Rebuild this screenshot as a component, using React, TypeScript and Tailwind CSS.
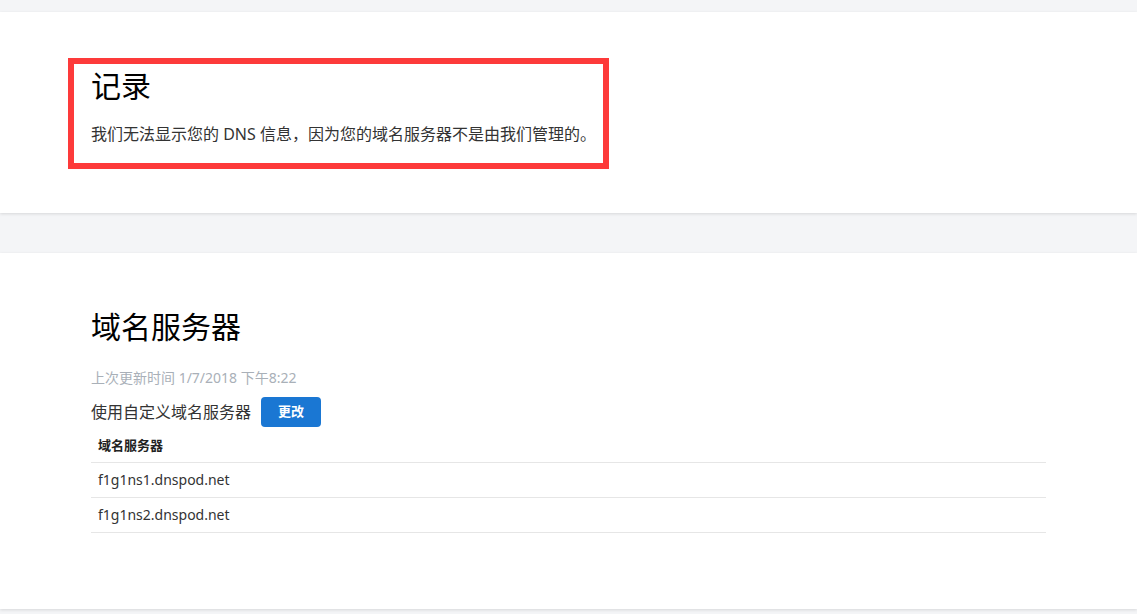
const font = { fontFamily: '"Noto Sans", "Noto Sans CJK SC", sans-serif' };

export default function App() {
  const servers = ["f1g1ns1.dnspod.net", "f1g1ns2.dnspod.net"];
  return (
    <div className="min-h-screen bg-[#f4f5f7] pt-[12px] text-[#222]" style={font}>
      {/* 记录 */}
      <section className="h-[201px] bg-white pl-[68px] pt-[46px] shadow-[0_1px_3px_rgba(0,0,0,0.12)]">
        <div className="h-[111px] w-[541px] border-[6px] border-[#fd3a3a] pl-[17px] pt-[4px]">
          <h2 className="text-[30px] leading-[36px] text-black">记录</h2>
          <p className="mt-[19px] text-[16px] leading-[22px] text-[#333]">
            我们无法显示您的 DNS 信息，因为您的域名服务器不是由我们管理的。
          </p>
        </div>
      </section>

      {/* 域名服务器 */}
      <section className="mt-[40px] h-[356px] bg-white pl-[91px] pr-[91px] pt-[54px] shadow-[0_1px_3px_rgba(0,0,0,0.12)]">
        <h2 className="text-[30px] leading-[40px] text-black">域名服务器</h2>
        <p className="mt-[21px] text-[14px] leading-[20px] text-[#a9b0b8]">上次更新时间 1/7/2018 下午8:22</p>
        <div className="mt-[9px] flex items-center gap-[10px]">
          <span className="text-[16px] text-[#333]">使用自定义域名服务器</span>
          <button className="h-[30px] w-[60px] rounded-[4px] bg-[#1a77d3] text-[13px] font-bold text-white">更改</button>
        </div>
        <table className="mt-[2px] w-[955px] text-left">
          <thead>
            <tr className="border-b border-[#e6e6e6]">
              <th className="h-[33px] px-[7px] text-[13px] font-bold text-[#222]">域名服务器</th>
            </tr>
          </thead>
          <tbody>
            {servers.map((s) => (
              <tr key={s} className="border-b border-[#e6e6e6]">
                <td className="h-[35px] px-[7px] text-[14px] text-[#333]">{s}</td>
              </tr>
            ))}
          </tbody>
        </table>
      </section>
    </div>
  );
}
